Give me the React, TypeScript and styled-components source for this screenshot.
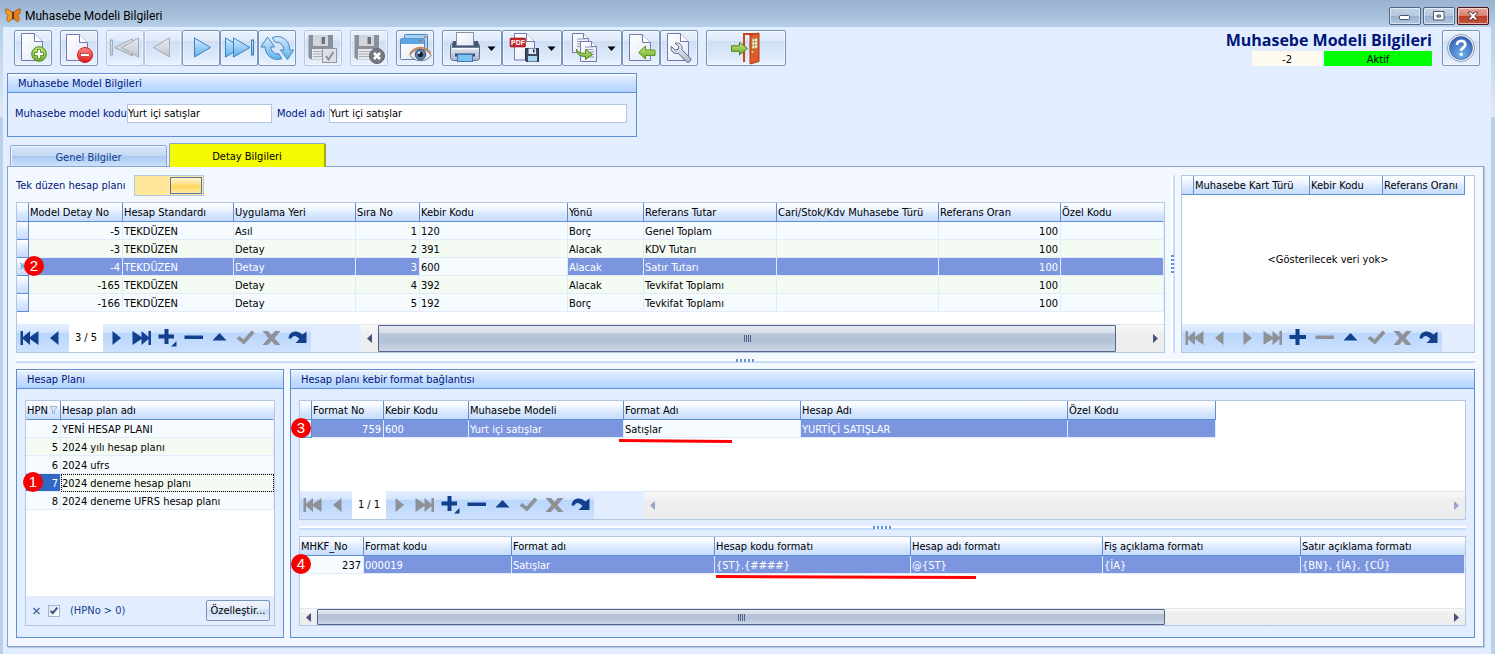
import React from "react";
import styled, { createGlobalStyle, css } from "styled-components";

const uiFont = `"DejaVu Sans Condensed", "DejaVu Sans", "Noto Sans", sans-serif`;
const navy = "#00147a";
const line = "#5f8fd2";
const softLine = "#b3c7e3";

const GlobalStyle = createGlobalStyle`
  *, *::before, *::after { box-sizing: border-box; }
  body { margin: 0; background: #e2eeff; }
  button, input { font: inherit; color: inherit; margin: 0; }
  button { cursor: pointer; }
`;

const Window = styled.div`
  min-height: 100vh;
  min-width: 1240px;
  display: flex;
  flex-direction: column;
  font: 11px/17px ${uiFont};
  color: #000;
  background: linear-gradient(#b5cfe9, #dfeaf8 90px, #bad1ea 90px) 0 27px no-repeat;
`;

const TitleBar = styled.header`
  height: 27px;
  flex: none;
  display: flex;
  align-items: center;
  gap: 4px;
  padding: 4px 6px 0 5px;
  background: linear-gradient(#99b3d1, #a4bed9 50%, #b7d0e9);
`;

const WindowTitle = styled.h1`
  margin: 0;
  flex: 1;
  font: 400 12px/18px Roboto, "Open Sans", sans-serif;
`;

const CaptionButtons = styled.div`
  display: flex;
  gap: 2px;
`;

const CaptionButton = styled.button<{ $close?: boolean }>`
  width: 32px;
  height: 18px;
  padding: 0;
  display: flex;
  align-items: center;
  justify-content: center;
  border: 1px solid ${(p) => (p.$close ? "#4d1219" : "#536680")};
  border-radius: 2px;
  box-shadow: inset 0 0 0 1px rgba(255, 255, 255, 0.55);
  background: ${(p) =>
    p.$close
      ? "linear-gradient(#e6a79b, #d5806f 48%, #ba3d26 50%, #c4553b)"
      : "linear-gradient(#c2d3e6, #b5c8de 48%, #98b0cc 50%, #b0c8e2)"};
`;

const Client = styled.main`
  flex: 1;
  display: flex;
  flex-direction: column;
  margin: 0 4px 0 3px;
  padding: 3px 7px 7px 4px;
  background: #e2eeff;
`;

const Toolbar = styled.div`
  display: flex;
  align-items: flex-start;
  gap: 8px;
  padding: 0 4px 0 7px;
`;

const ToolGroup = styled.div`
  display: flex;
`;

const ToolButton = styled.button<{ $w?: number }>`
  width: ${(p) => p.$w ?? 38}px;
  height: 36px;
  padding: 0;
  border: 1px solid #7995bf;
  border-radius: 2px;
  box-shadow: inset 0 0 0 1px rgba(255, 255, 255, 0.45);
  background: linear-gradient(#eaf2fe, #dfe9f8 28%, #cfdff3 30%, #dce9fa 75%, #e9f3ff);
  svg { display: block; }
  &:disabled { border-color: #b5c7e2; cursor: default; }
`;

const ToolTitle = styled.div`
  margin-left: auto;
  display: flex;
  gap: 10px;
`;

const FormHeading = styled.div`
  width: 202px;
  display: flex;
  flex-direction: column;
  align-items: flex-end;
`;

const FormName = styled.h2`
  margin: 0;
  font: 700 16px/21px "Open Sans", "Noto Sans", sans-serif;
  color: ${navy};
  white-space: nowrap;
`;

const StatusRow = styled.div`
  display: flex;
  gap: 2px;
`;

const StatusBox = styled.output<{ $w: number; $bg: string }>`
  width: ${(p) => p.$w}px;
  height: 15px;
  line-height: 17px;
  text-align: center;
  background: ${(p) => p.$bg};
`;

const Panel = styled.section<{ $w?: number }>`
  position: relative;
  display: flex;
  flex-direction: column;
  ${(p) => (p.$w ? css`width: ${p.$w}px; flex: none;` : css`flex: 1; min-width: 0;`)}
  border: 1px solid ${line};
  background: #e2eeff;
`;

const PanelTitle = styled.h3`
  margin: 0;
  height: 19px;
  padding-left: 10px;
  font: inherit;
  line-height: 20px;
  color: ${navy};
  border-bottom: 1px solid ${line};
  background: linear-gradient(#fff, #e2eeff 2px, #c6deff 55%, #b2d3ff);
`;

const PanelBody = styled.div`
  flex: 1;
  display: flex;
  flex-direction: column;
  padding: 11px 8px;
`;

const ModelBox = styled.div`
  display: flex;
  margin-top: 7px;
`;

const FieldRow = styled.div`
  display: flex;
  align-items: center;
  gap: 5px;
  padding: 11px 9px 13px 7px;
  color: ${navy};
`;

const FieldLabel = styled.label<{ $w?: number }>`
  width: ${(p) => (p.$w ? `${p.$w}px` : "auto")};
  flex: none;
  white-space: nowrap;
  color: ${navy};
`;

const TextInput = styled.input<{ $w?: number }>`
  ${(p) => (p.$w ? css`width: ${p.$w}px;` : css`flex: 1; min-width: 0;`)}
  height: 19px;
  padding: 0;
  border: 1px solid ${softLine};
  background: #fff;
  color: #000;
  outline: none;
`;

const Tabs = styled.div`
  display: flex;
  align-items: flex-end;
  gap: 2px;
  padding-left: 3px;
  margin-top: 6px;
  height: 24px;
`;

const Tab = styled.button<{ $active?: boolean }>`
  position: relative;
  width: 157px;
  padding: 0;
  ${(p) =>
    p.$active
      ? css`
          height: 24px;
          padding-top: 2px;
          background: #f4fa00;
          border: 1px solid #8ba6d3;
          border-right: 2px solid #a3ac13;
          border-bottom: 0;
        `
      : css`
          height: 22px;
          padding-top: 2px;
          color: #113f8f;
          border: 1px solid #8ba6d3;
          box-shadow: inset 1px 1px 0 #f3f8ff;
          background: linear-gradient(#d8e6f8, #c5d9f3 48%, #a9c9f2 52%, #cde2fd);
        `}
  border-radius: 2px 2px 0 0;
`;

const TabPanel = styled.div`
  flex: 1;
  display: flex;
  flex-direction: column;
  margin-top: -1px;
  padding: 8px;
  border: 1px solid #8ba4cf;
  box-shadow: 1px 1px 1px #b6c8e4;
  background: #f3f8ff;
`;

const TopRow = styled.div`
  display: flex;
`;

const Column = styled.div`
  flex: 1;
  min-width: 0;
  display: flex;
  flex-direction: column;
`;

const ToggleRow = styled.div`
  display: flex;
  align-items: center;
  gap: 10px;
  height: 21px;
  margin-bottom: 6px;
`;

const Toggle = styled.input`
  appearance: none;
  width: 70px;
  height: 21px;
  padding: 1px;
  border: 1px solid ${softLine};
  background: #ffe79c;
  &::before {
    content: "";
    display: block;
    width: 32px;
    height: 17px;
    margin-left: auto;
    border: 1px solid #5b76a5;
    background: linear-gradient(#fff3ce, #ffe28c 40%, #ffd659 55%, #ffeaa6);
  }
`;

const GridFrame = styled.div<{ $w?: number; $h?: number; $grow?: boolean }>`
  position: relative;
  display: flex;
  flex-direction: column;
  ${(p) => (p.$w ? css`width: ${p.$w}px;` : "")}
  ${(p) => (p.$h ? css`min-height: ${p.$h}px;` : "")}
  ${(p) => (p.$grow ? css`flex: 1;` : css`flex: none;`)}
  border: 1px solid ${softLine};
  background: #fff;
`;

const GridArea = styled.div`
  flex: 1;
`;

const Table = styled.table<{ $fit?: boolean }>`
  table-layout: fixed;
  width: ${(p) => (p.$fit ? "1px" : "100%")};
  border-collapse: separate;
  border-spacing: 0;
`;

const Th = styled.th<{ $last?: boolean }>`
  height: 19px;
  padding: 0 1px;
  font-weight: 400;
  line-height: 17px;
  text-align: left;
  white-space: nowrap;
  border-right: 1px solid ${(p) => (p.$last ? "transparent" : line)};
  border-bottom: 1px solid ${line};
  background: linear-gradient(#fff, #f0f6ff 30%, #d6e6fe 60%, #c4dbfc) border-box;
`;

type CellTone = "odd" | "even" | "sel" | "hot";
const tones: Record<CellTone, string> = {
  odd: "#f5fbff",
  even: "#f4fbf3",
  sel: "#7b96df",
  hot: "#3168c6",
};

const Td = styled.td<{ $tone: CellTone; $right?: boolean; $focus?: boolean }>`
  position: relative;
  height: 18px;
  padding: 2px ${(p) => (p.$right ? 2 : 1)}px 0;
  line-height: 15px;
  white-space: nowrap;
  text-align: ${(p) => (p.$right ? "right" : "left")};
  color: ${(p) => (p.$tone === "sel" || p.$tone === "hot" ? "#fff" : "#000")};
  border-right: 1px solid #e0ebfc;
  border-bottom: 1px solid #e0ebfc;
  background: ${(p) => tones[p.$tone]};
  ${(p) => (p.$focus ? css`outline: 1px dotted #000; outline-offset: -1px;` : "")}
`;

const Indicator = styled.td`
  position: relative;
  height: 18px;
  padding: 0 0 0 3px;
  line-height: 15px;
  color: #5f97e0;
  border-right: 1px solid ${line};
  border-bottom: 1px solid ${line};
  background: linear-gradient(#fff, #e1edff 45%, #c4dbfc);
`;

const HeadWithFilter = styled.span`
  display: flex;
  align-items: center;
  justify-content: space-between;
  padding-right: 2px;
`;

const NavBar = styled.div`
  display: flex;
  background: #e2eeff;
`;

const NavButtons = styled.div`
  display: flex;
  background: linear-gradient(#e4efff, #d3e5fd 30%, #b9d6fd 33%, #cde1fc);
`;

const NavButton = styled.button`
  width: 26px;
  height: 28px;
  padding: 0;
  border: 0;
  background: none;
  color: #12408c;
  svg { display: block; }
  &:disabled { color: #8e9196; cursor: default; }
`;

const Position = styled.span`
  width: 34px;
  line-height: 28px;
  text-align: center;
  background: #fff;
`;

const ScrollBar = styled.div<{ $h: number; $inset?: number }>`
  flex: 1;
  height: ${(p) => p.$h}px;
  margin-left: ${(p) => p.$inset ?? 0}px;
  display: flex;
  border-top: 1px solid #e3e6ea;
  background: linear-gradient(#fafafa, #eeeeee 30%, #ededed);
`;

const ScrollArrow = styled.button`
  width: 17px;
  padding: 0;
  border: 0;
  background: none;
  display: flex;
  align-items: center;
  justify-content: center;
  color: #46527e;
  &:disabled { color: #98a3c9; }
`;

const Track = styled.div`
  flex: 1;
`;

const Thumb = styled.div<{ $size: number }>`
  width: ${(p) => p.$size}%;
  height: 100%;
  display: flex;
  align-items: center;
  justify-content: center;
  gap: 1px;
  border: 1px solid #53628f;
  border-radius: 1px;
  background: linear-gradient(#e6eaf0, #d5dde7 28%, #b9c6d8 31%, #b3c2d8 60%, #ccd7e7);
  i { width: 1px; height: 7px; background: #4f5f85; }
`;

const VSplitter = styled.div`
  width: 4px;
  margin: 0 6px;
  display: flex;
  align-items: center;
  background: linear-gradient(90deg, #fff 50%, #c5dcfb 50%);
`;

const HSplitter = styled.div`
  height: 4px;
  flex: none;
  margin: 6px 0;
  display: flex;
  justify-content: center;
  background: linear-gradient(#fff 50%, #c5dcfb 50%);
`;

const Grip = styled.span<{ $vertical?: boolean }>`
  ${(p) =>
    p.$vertical
      ? css`width: 3px; height: 19px; background: repeating-linear-gradient(#5f95d8 0 2px, #fff 2px 4px);`
      : css`width: 19px; height: 3px; background: repeating-linear-gradient(90deg, #5f95d8 0 2px, #fff 2px 4px);`}
`;

const BottomRow = styled.div`
  flex: 1;
  display: flex;
  gap: 6px;
`;

const EmptyNote = styled.p`
  margin: 0;
  flex: 1;
  display: flex;
  align-items: center;
  justify-content: center;
`;

const FilterBar = styled.div`
  height: 29px;
  display: flex;
  align-items: center;
  padding: 0 4px 0 6px;
  gap: 7px;
  background: #e2eeff;
  label { flex: 1; display: flex; align-items: center; gap: 10px; color: #12408c; }
`;

const PlainButton = styled.button`
  width: 9px;
  height: 12px;
  padding: 0;
  border: 0;
  background: none;
  color: #3f66a5;
  svg { display: block; }
`;

const Check = styled.input`
  appearance: none;
  width: 12px;
  height: 12px;
  border: 1px solid #9fb6d6;
  background: linear-gradient(135deg, #dbe3ee, #fff);
  display: grid;
  place-items: center;
  &::before {
    content: "";
    width: 4px;
    height: 8px;
    margin-top: -2px;
    border: solid #39547f;
    border-width: 0 2px 2px 0;
    transform: rotate(40deg);
  }
`;

const CustomizeButton = styled.button`
  width: 64px;
  height: 21px;
  padding: 0;
  border: 1px solid #7995bf;
  border-radius: 2px;
  background: linear-gradient(#eff5fe, #e0eaf8 48%, #ccdcf2 50%, #e6f0fe);
`;

const Badge = styled.span<{ $x: number }>`
  position: absolute;
  z-index: 2;
  left: ${(p) => p.$x}px;
  top: -2px;
  width: 20px;
  height: 20px;
  border-radius: 50%;
  background: #f60000;
  color: #fff;
  font: 15px/20px "Liberation Sans", sans-serif;
  text-align: center;
`;

const Stroke = styled.svg<{ $x: number }>`
  position: absolute;
  z-index: 2;
  left: ${(p) => p.$x}px;
  top: 18px;
`;

const HiddenDefs = styled.svg`
  position: absolute;
`;

/* ---------- drawings ---------- */

const Defs = () => (
  <HiddenDefs width="0" height="0" aria-hidden>
    <defs>
      <linearGradient id="paper" x1="0" y1="0" x2="1" y2="1">
        <stop offset="0" stopColor="#fff" />
        <stop offset="1" stopColor="#e3e8f4" />
      </linearGradient>
      <linearGradient id="green" x1="0" y1="0" x2="0" y2="1">
        <stop offset="0" stopColor="#c3e676" />
        <stop offset="1" stopColor="#6fae2c" />
      </linearGradient>
      <linearGradient id="red" x1="0" y1="0" x2="0" y2="1">
        <stop offset="0" stopColor="#fb8e8e" />
        <stop offset="1" stopColor="#e01515" />
      </linearGradient>
      <linearGradient id="blue" x1="0" y1="0" x2="0" y2="1">
        <stop offset="0" stopColor="#d3ecfd" />
        <stop offset="1" stopColor="#5fb0ec" />
      </linearGradient>
      <linearGradient id="grey" x1="0" y1="0" x2="0" y2="1">
        <stop offset="0" stopColor="#e9edf2" />
        <stop offset="1" stopColor="#c0c5cd" />
      </linearGradient>
      <linearGradient id="steel" x1="0" y1="0" x2="0" y2="1">
        <stop offset="0" stopColor="#f5f7fb" />
        <stop offset="1" stopColor="#aab6cb" />
      </linearGradient>
      <radialGradient id="globe" cx=".5" cy=".8" r=".8">
        <stop offset="0" stopColor="#6fb0ec" />
        <stop offset="1" stopColor="#2f5fb0" />
      </radialGradient>
    </defs>
  </HiddenDefs>
);

const Icon = ({ w = 38, children }: { w?: number; children: React.ReactNode }) => (
  <svg width={w - 2} height="34" viewBox={`1 1 ${w - 2} 34`} aria-hidden>
    {children}
  </svg>
);

const Page = ({ x, y, w, h, fold = 8 }: { x: number; y: number; w: number; h: number; fold?: number }) => (
  <g stroke="#7479b4" strokeLinejoin="round">
    <path d={`M${x} ${y}h${w - fold}l${fold} ${fold}v${h - fold}h${-w}z`} fill="url(#paper)" />
    <path d={`M${x + w - fold} ${y}v${fold}h${fold}`} fill="#fff" />
  </g>
);

const Caret = () => <path d="M45.5 16.5h8l-4 4.5z" fill="#000" />;

const NewIcon = () => (
  <Icon>
    <Page x={7.5} y={3.5} w={21} h={27} />
    <circle cx="25" cy="24" r="7.3" fill="url(#green)" stroke="#4c8421" />
    <path d="M23.5 19.5h3v3h3v3h-3v3h-3v-3h-3v-3h3z" fill="#fff" stroke="#4c8421" strokeWidth=".8" />
  </Icon>
);

const DeleteIcon = () => (
  <Icon>
    <Page x={6.5} y={4.5} w={21} h={26} />
    <circle cx="25" cy="25" r="7.5" fill="url(#red)" stroke="#d02020" />
    <rect x="20.5" y="23.5" width="9" height="3" fill="#fff" stroke="#b01414" strokeWidth=".6" />
  </Icon>
);

const FirstIcon = () => (
  <Icon>
    <g fill="url(#grey)" stroke="#a3aab5">
      <path d="M26.5 9v17L8.5 17.5z" />
      <path d="M32.5 8v19L15.500 17.500z" />
      <rect x="4.500" y="10" width="2" height="15" />
    </g>
  </Icon>
);

const PrevIcon = () => (
  <Icon>
    <path d="M25.500 8v19L9.500 17.500z" fill="url(#grey)" stroke="#a3aab5" />
  </Icon>
);

const NextIcon = () => (
  <Icon>
    <path d="M12.500 8v19L28.500 17.500z" fill="url(#blue)" stroke="#3f7fc0" />
  </Icon>
);

const LastIcon = () => (
  <Icon>
    <g fill="url(#blue)" stroke="#3f7fc0">
      <path d="M5.500 8v19L22 17.500z" />
      <path d="M13.500 8v19L30 17.500z" />
      <rect x="31.500" y="10" width="2" height="15" />
    </g>
  </Icon>
);

const RefreshIcon = () => (
  <Icon>
    <g fill="url(#blue)" stroke="#4586c2" strokeLinejoin="round">
      <path d="M9.500 7L3 17h4c.5 7 5.500 12.500 12.500 12.500 1.800 0 3-.3 4.300-.9l-3-4.800c-4.500.4-7.600-2.500-8.100-6.800h3.800z" />
      <path d="M29.500 29.500L35.500 20h-3.700C31.400 12 26.500 6.800 19.500 6.500c-2 0-3.700.5-5.200 1.300l3 4.500c4.700-.7 8.300 2.800 8.600 7.700H22.500z" />
    </g>
  </Icon>
);

const GreyFloppy = () => (
  <>
    <path d="M4.500 5h24.500v24.500H7l-2.500-2z" fill="#8c9199" />
    <rect x="9" y="5" width="15" height="11" fill="#d3d7dd" />
    <rect x="17.500" y="7" width="3.500" height="7" fill="#6e737b" />
    <rect x="8" y="19" width="17" height="10.500" fill="#e4e7eb" />
    <path d="M9 21.500h14M9 24h14M9 26.500h14" stroke="#aab0b8" />
  </>
);

const SaveIcon = () => (
  <Icon>
    <GreyFloppy />
    <rect x="18.500" y="18.500" width="14" height="14" fill="#dde0e4" stroke="#92979f" />
    <path d="M22 26l2.500 3.500L29.500 22" fill="none" stroke="#8b9199" strokeWidth="2" />
  </Icon>
);

const SaveCancelIcon = () => (
  <Icon>
    <GreyFloppy />
    <circle cx="27" cy="26" r="7.500" fill="#767b83" stroke="#5f646c" />
    <path d="M24 23l6 6M30 23l-6 6" stroke="#fff" strokeWidth="2.600" />
  </Icon>
);

const ViewIcon = () => (
  <Icon>
    <rect x="8.500" y="4.500" width="23" height="18" rx="1" fill="#a9d3f4" stroke="#4b87c4" />
    <circle cx="29" cy="7" r="1" fill="#e9503f" />
    <rect x="4.500" y="8.500" width="24" height="21" rx="1" fill="url(#paper)" stroke="#6d7fb4" />
    <rect x="5" y="8.500" width="23" height="5.500" fill="#5aa6e2" />
    <circle cx="24.500" cy="11" r="1" fill="#e9503f" />
    <path d="M14 25.500c5-8.500 16-8.500 21 0-5 7-16 7-21 0z" fill="#f0f3fa" stroke="#68708f" />
    <path d="M14 24c5-8.500 16-8.500 20.500-.5" fill="none" stroke="#c98a4e" strokeWidth="1.800" />
    <circle cx="24.500" cy="24.500" r="5.300" fill="#5f7ea8" stroke="#34486c" />
    <circle cx="24.500" cy="24.500" r="2.600" fill="#131a2c" />
    <circle cx="23" cy="22.800" r="1.100" fill="#fff" />
  </Icon>
);

const PrintIcon = () => (
  <Icon w={60}>
    <rect x="8.500" y="13" width="29" height="17.500" rx="3" fill="url(#steel)" stroke="#5b6b93" />
    <path d="M11 11h25l1.500 7.500h-28z" fill="#465475" />
    <rect x="14.500" y="2.500" width="17" height="13" fill="url(#paper)" stroke="#878fb2" />
    <path d="M10 18.500h27" stroke="#f8faff" strokeWidth="1.500" />
    <path d="M13 23.500h20v3H13z" fill="#3c4a6c" />
    <rect x="15.500" y="24.500" width="15" height="7" fill="#7cc2f2" stroke="#3f78ba" />
    <Caret />
  </Icon>
);

const PdfIcon = () => (
  <Icon w={60}>
    <Page x={12.5} y={3.5} w={20} h={26.5} />
    <rect x="8" y="8" width="15.500" height="9" rx="1" fill="#c4262b" stroke="#9c1419" strokeWidth=".6" />
    <text x="9" y="15" fontSize="7" fontWeight="700" fill="#fff" fontFamily="Liberation Sans, sans-serif">PDF</text>
    <path d="M23.500 18.500h13v13h-12l-1-1z" fill="#3d4a66" stroke="#232c42" />
    <rect x="26.500" y="18.500" width="7.500" height="5.500" fill="#e3e8f2" />
    <rect x="31" y="19.500" width="1.500" height="3" fill="#232c42" />
    <rect x="26" y="26" width="9" height="5.500" fill="#a9d4f2" />
    <Caret />
  </Icon>
);

const CopyIcon = () => (
  <Icon w={60}>
    <Page x={10.5} y={3.5} w={16} h={19} fold={5} />
    <path d="M15 9h8M15 11.500h8M15 14h8M15 16.500h8" stroke="#8d98b8" />
    <Page x={18.5} y={11.5} w={16} h={20} fold={5} />
    <path d="M23 17h8M23 19.500h8M28 22h4M30 24.500h2M28 27h4" stroke="#8d98b8" />
    <path d="M14.500 19c1.500 4 5 4.500 9 4.200V19.500l7 5-7 5v-3c-5.500 0-9-2-9-7.500z" fill="url(#green)" stroke="#4c8421" strokeLinejoin="round" />
    <Caret />
  </Icon>
);

const ExportIcon = () => (
  <Icon>
    <Page x={7.5} y={4.5} w={21} h={26} />
    <path d="M16.500 22.500l7-6.500v4h9.500v5.500h-9.500V29z" fill="url(#green)" stroke="#5d9427" strokeLinejoin="round" />
  </Icon>
);

const WrenchIcon = () => (
  <Icon>
    <Page x={7.5} y={3.5} w={21} h={27} />
    <path
      d="M15 13.300c4-1.500 8 2 7 6.500l8.300 8.300c1.700 2.400-1.500 5.400-3.800 3.700l-8.300-8.500c-4 1.200-8.200-2.200-7-7l4 3.800 3-.8.700-2.800z"
      fill="url(#steel)"
      stroke="#59688c"
      strokeLinejoin="round"
    />
  </Icon>
);

const ExitIcon = () => (
  <Icon w={80}>
    <path d="M38 32V4h12" fill="none" stroke="#c9451c" strokeWidth="2" />
    <path d="M44 5l9-2v28.500L44 34z" fill="#dd5a2b" stroke="#b23a14" />
    <path d="M46 9l5.500-1v10L46 19z" fill="#fff2d0" stroke="#a98a4c" strokeWidth=".8" />
    <path d="M48.700 8.500v10M46 12l5.500-.7M46 15.500l5.500-.7" stroke="#a98a4c" strokeWidth=".8" />
    <circle cx="46.500" cy="22" r="1" fill="#ffd98c" />
    <path d="M25.500 15.800h8v-3.500l8 6.200-8 6.500v-3.700h-8z" fill="url(#green)" stroke="#4c8421" strokeLinejoin="round" />
  </Icon>
);

const HelpIcon = () => (
  <Icon>
    <circle cx="19" cy="18" r="13.500" fill="#f4f7fc" stroke="#8d9cbd" />
    <circle cx="19" cy="18" r="11.500" fill="url(#globe)" stroke="#3a5da0" strokeWidth=".6" />
    <path d="M15 15c0-5.500 8.300-5.500 8.300-.6 0 3.300-4.100 3.200-4.100 6.400" fill="none" stroke="#fff" strokeWidth="2.800" />
    <circle cx="19.200" cy="24.300" r="1.700" fill="#fff" />
  </Icon>
);

const Butterfly = () => (
  <svg width="16" height="15" viewBox="0 0 16 15" aria-hidden>
    <path d="M7.500 5C6 2 2 .5.500 1c0 2.500.5 5 2.500 6.500C1.500 9 1.500 12 3 14c2.500-.5 4-3 4.500-5.500z" fill="#f59a1c" stroke="#8a4a10" strokeWidth=".6" />
    <path d="M8.500 5C10 2 14 .5 15.500 1c0 2.500-.5 5-2.500 6.500 1.500 1.500 1.500 4.500 0 6.500-2.500-.5-4-3-4.500-5.500z" fill="#ee7d12" stroke="#8a4a10" strokeWidth=".6" />
    <path d="M8 3.500v8" stroke="#3d2208" strokeWidth="1.400" />
  </svg>
);

const Funnel = () => (
  <svg width="7" height="8" viewBox="0 0 7 8" aria-hidden>
    <path d="M.5.500h6v1.500L4.500 4.200v3h-2v-3L.5 2z" fill="#dbe7f8" stroke="#8ea6cc" strokeWidth=".8" />
  </svg>
);

const navShapes = {
  first: <path d="M3.500 7H6v6l7-6v6l8.500-6v14L13 15v6l-7-6v6H3.500z" />,
  prev: <path d="M7 14l8.500-7v14z" />,
  next: <path d="M18 14L9.500 7v14z" />,
  last: <path d="M22 7h-2.500v6l-7-6v6L3.500 7v14l9-6v6l7-6v6H22z" />,
  append: <path d="M9.500 5h4v5.500H19v4h-5.500V20h-4v-5.500H3.500v-4h6zM21.500 17v5.500H16z" />,
  add: <path d="M9.500 5h4v6H20v4h-6.500v6h-4v-6H3.500v-4h6z" />,
  remove: <path d="M3.500 11.500h18.500V15H3.500z" />,
  up: <path d="M12.500 9l7 7.500h-14z" />,
  check: <path d="M3.500 14.500L6.500 12l4 3.500 8-9L21.500 9 11 20.500z" />,
  cancel: <path d="M3.500 7H9l3.500 4L16 7h5.500l-6 7 6 7H16l-3.500-4L9 21H3.500l6-7z" />,
  redo: <path d="M3.500 14.500C4 7.500 11.500 5 17.500 10.500L21.500 7.500V19H10.500l4-4C11 11 7.500 11 6.500 14.500z" />,
};
type NavKind = keyof typeof navShapes;

const navNames: Record<NavKind, string> = {
  first: "İlk kayıt", prev: "Önceki kayıt", next: "Sonraki kayıt", last: "Son kayıt", append: "Ekle", add: "Ekle",
  remove: "Sil", up: "Düzenle", check: "Onayla", cancel: "Vazgeç", redo: "Yenile",
};

const Navigator = ({ position, disabled, add }: { position?: string; disabled: NavKind[]; add: NavKind }) => {
  const button = (kind: NavKind) => (
    <NavButton key={kind} aria-label={navNames[kind]} disabled={disabled.includes(kind)}>
      <svg width="26" height="28" viewBox="0 0 26 28" fill="currentColor" aria-hidden>
        {navShapes[kind]}
      </svg>
    </NavButton>
  );
  return (
    <NavButtons>
      {button("first")}
      {button("prev")}
      {position && <Position>{position}</Position>}
      {(["next", "last", add, "remove", "up", "check", "cancel", "redo"] as NavKind[]).map(button)}
    </NavButtons>
  );
};

const Scroll = ({ height, inset, size }: { height: number; inset?: number; size?: number }) => (
  <ScrollBar $h={height} $inset={inset}>
    <ScrollArrow aria-label="Sola kaydır" disabled={!size}>
      <svg width="5" height="9" viewBox="0 0 5 9" aria-hidden><path d="M5 0v9L0 4.500z" fill="currentColor" /></svg>
    </ScrollArrow>
    <Track>{size && <Thumb $size={size}><i /><i /><i /><i /></Thumb>}</Track>
    <ScrollArrow aria-label="Sağa kaydır" disabled={!size}>
      <svg width="5" height="9" viewBox="0 0 5 9" aria-hidden><path d="M0 0v9l5-4.500z" fill="currentColor" /></svg>
    </ScrollArrow>
  </ScrollBar>
);

const Cols = ({ widths }: { widths: (number | undefined)[] }) => (
  <colgroup>
    {widths.map((w, i) => (
      <col key={i} width={w} />
    ))}
  </colgroup>
);

/* ---------- data ---------- */

const detailHeads = ["Model Detay No", "Hesap Standardı", "Uygulama Yeri", "Sıra No", "Kebir Kodu", "Yönü", "Referans Tutar", "Cari/Stok/Kdv Muhasebe Türü", "Referans Oran", "Özel Kodu"];
const detailRows = [
  ["-5", "TEKDÜZEN", "Asıl", "1", "120", "Borç", "Genel Toplam", "", "100", ""],
  ["-3", "TEKDÜZEN", "Detay", "2", "391", "Alacak", "KDV Tutarı", "", "100", ""],
  ["-4", "TEKDÜZEN", "Detay", "3", "600", "Alacak", "Satır Tutarı", "", "100", ""],
  ["-165", "TEKDÜZEN", "Detay", "4", "392", "Alacak", "Tevkifat Toplamı", "", "100", ""],
  ["-166", "TEKDÜZEN", "Detay", "5", "192", "Borç", "Tevkifat Toplamı", "", "100", ""],
];
const detailRight = [0, 3, 8];

const plans = [
  ["2", "YENİ HESAP PLANI"],
  ["5", "2024 yılı hesap planı"],
  ["6", "2024 ufrs"],
  ["7", "2024 deneme hesap planı"],
  ["8", "2024 deneme UFRS hesap planı"],
];

const bindHeads = ["Format No", "Kebir Kodu", "Muhasebe Modeli", "Format Adı", "Hesap Adı", "Özel Kodu"];
const bindRow = ["759", "600", "Yurt içi satışlar", "Satışlar", "YURTİÇİ SATIŞLAR", ""];

const formatHeads = ["MHKF_No", "Format kodu", "Format adı", "Hesap kodu formatı", "Hesap adı formatı", "Fiş açıklama formatı", "Satır açıklama formatı"];
const formatRow = ["237", "000019", "Satışlar", "{ST}.{####}", "@{ST}", "{İA}", "{BN}, {İA}, {CÜ}"];

/* ---------- page ---------- */

const MainToolbar = () => (
  <Toolbar>
    <ToolButton aria-label="Yeni"><NewIcon /></ToolButton>
    <ToolButton aria-label="Sil"><DeleteIcon /></ToolButton>
    <ToolGroup>
      <ToolButton aria-label="İlk" disabled><FirstIcon /></ToolButton>
      <ToolButton aria-label="Önceki" disabled><PrevIcon /></ToolButton>
      <ToolButton aria-label="Sonraki"><NextIcon /></ToolButton>
      <ToolButton aria-label="Son"><LastIcon /></ToolButton>
      <ToolButton aria-label="Yenile"><RefreshIcon /></ToolButton>
    </ToolGroup>
    <ToolButton aria-label="Kaydet" disabled><SaveIcon /></ToolButton>
    <ToolButton aria-label="Vazgeç" disabled><SaveCancelIcon /></ToolButton>
    <ToolButton aria-label="Görünüm"><ViewIcon /></ToolButton>
    <ToolGroup>
      <ToolButton $w={60} aria-label="Yazdır"><PrintIcon /></ToolButton>
      <ToolButton $w={60} aria-label="PDF olarak kaydet"><PdfIcon /></ToolButton>
      <ToolButton $w={60} aria-label="Kopyala"><CopyIcon /></ToolButton>
      <ToolButton aria-label="Aktar"><ExportIcon /></ToolButton>
      <ToolButton aria-label="Ayarlar"><WrenchIcon /></ToolButton>
    </ToolGroup>
    <ToolButton $w={80} aria-label="Çıkış"><ExitIcon /></ToolButton>
    <ToolTitle>
      <FormHeading>
        <FormName>Muhasebe Modeli Bilgileri</FormName>
        <StatusRow>
          <StatusBox $w={70} $bg="#fffaf0">-2</StatusBox>
          <StatusBox $w={108} $bg="#00ff00">Aktif</StatusBox>
        </StatusRow>
      </FormHeading>
      <ToolButton aria-label="Yardım"><HelpIcon /></ToolButton>
    </ToolTitle>
  </Toolbar>
);

const DetailGrid = () => (
  <GridFrame $h={151}>
    <GridArea>
      <Table>
        <Cols widths={[12, 94, 111, 122, 64, 148, 76, 133, 162, 122, undefined]} />
        <thead>
          <tr>
            <Th />
            {detailHeads.map((h, i) => <Th key={h} $last={i === detailHeads.length - 1}>{h}</Th>)}
          </tr>
        </thead>
        <tbody>
          {detailRows.map((row, r) => (
            <tr key={row[0]}>
              <Indicator>
                {r === 2 && (
                  <>
                    <svg width="5" height="8" viewBox="0 0 5 8" aria-hidden><path d="M0 1l4 3-4 3M4.500 1L1 4l3.500 3" fill="none" stroke="currentColor" /></svg>
                    <Badge $x={7}>2</Badge>
                  </>
                )}
              </Indicator>
              {row.map((cell, c) => (
                <Td key={c} $right={detailRight.includes(c)} $tone={r === 2 ? (c === 4 ? "odd" : "sel") : r % 2 ? "even" : "odd"}>
                  {cell}
                </Td>
              ))}
            </tr>
          ))}
        </tbody>
      </Table>
    </GridArea>
    <NavBar>
      <Navigator position="3 / 5" add="append" disabled={["check", "cancel"]} />
      <Scroll height={28} inset={50} size={96} />
    </NavBar>
  </GridFrame>
);

const CardGrid = () => (
  <GridFrame $w={294}>
    <Table $fit>
      <Cols widths={[12, 116, 73, 82]} />
      <thead>
        <tr>
          <Th />
          <Th>Muhasebe Kart Türü</Th>
          <Th>Kebir Kodu</Th>
          <Th>Referans Oranı</Th>
        </tr>
      </thead>
    </Table>
    <EmptyNote>&lt;Gösterilecek veri yok&gt;</EmptyNote>
    <NavBar>
      <Navigator add="add" disabled={["first", "prev", "next", "last", "remove", "check", "cancel"]} />
    </NavBar>
  </GridFrame>
);

const PlanGrid = () => (
  <GridFrame $grow>
    <GridArea>
      <Table>
        <Cols widths={[35, undefined]} />
        <thead>
          <tr>
            <Th><HeadWithFilter>HPN<Funnel /></HeadWithFilter></Th>
            <Th $last>Hesap plan adı</Th>
          </tr>
        </thead>
        <tbody>
          {plans.map(([no, name], r) => (
            <tr key={no}>
              <Td $right $tone={r === 3 ? "hot" : r % 2 ? "even" : "odd"}>
                {no}
                {r === 3 && <Badge $x={-3}>1</Badge>}
              </Td>
              <Td $tone={r % 2 ? "even" : "odd"} $focus={r === 3}>{name}</Td>
            </tr>
          ))}
        </tbody>
      </Table>
    </GridArea>
    <FilterBar>
      <PlainButton aria-label="Filtreyi kaldır">
        <svg width="9" height="12" viewBox="0 0 9 12" aria-hidden><path d="M1.500 3l6 6M7.500 3l-6 6" stroke="currentColor" strokeWidth="1.300" /></svg>
      </PlainButton>
      <label>
        <Check type="checkbox" defaultChecked />
        (HPNo &gt; 0)
      </label>
      <CustomizeButton>Özelleştir...</CustomizeButton>
    </FilterBar>
  </GridFrame>
);

const BindingGrid = () => (
  <GridFrame $h={120} $grow>
    <GridArea>
      <Table $fit>
        <Cols widths={[12, 72, 85, 155, 177, 267, 148]} />
        <thead>
          <tr>
            <Th />
            {bindHeads.map((h) => <Th key={h}>{h}</Th>)}
          </tr>
        </thead>
        <tbody>
          <tr>
            <Indicator><Badge $x={-9}>3</Badge></Indicator>
            {bindRow.map((cell, c) => (
              <Td key={c} $right={c === 0} $tone={c === 3 ? "odd" : "sel"}>
                {cell}
                {c === 3 && (
                  <Stroke $x={-5} width="114" height="6" aria-hidden>
                    <path d="M0 2.500L113 3.500" stroke="#f00" strokeWidth="3" />
                  </Stroke>
                )}
              </Td>
            ))}
          </tr>
        </tbody>
      </Table>
    </GridArea>
    <NavBar>
      <Navigator position="1 / 1" add="append" disabled={["first", "prev", "next", "last", "check", "cancel"]} />
      <Scroll height={28} inset={50} />
    </NavBar>
  </GridFrame>
);

const FormatGrid = () => (
  <GridFrame $h={90}>
    <GridArea>
      <Table>
        <Cols widths={[64, 148, 203, 196, 192, 198, undefined]} />
        <thead>
          <tr>
            {formatHeads.map((h, i) => <Th key={h} $last={i === formatHeads.length - 1}>{h}</Th>)}
          </tr>
        </thead>
        <tbody>
          <tr>
            {formatRow.map((cell, c) => (
              <Td key={c} $right={c === 0} $tone={c === 0 ? "odd" : "sel"}>
                {cell}
                {c === 0 && <Badge $x={-9}>4</Badge>}
                {c === 3 && (
                  <Stroke $x={1} width="260" height="6" aria-hidden>
                    <path d="M0 2.500L260 3.500" stroke="#f00" strokeWidth="3" />
                  </Stroke>
                )}
              </Td>
            ))}
          </tr>
        </tbody>
      </Table>
    </GridArea>
    <NavBar>
      <Scroll height={17} size={75} />
    </NavBar>
  </GridFrame>
);

export default function App() {
  return (
    <Window>
      <GlobalStyle />
      <Defs />
      <TitleBar>
        <Butterfly />
        <WindowTitle>Muhasebe Modeli Bilgileri</WindowTitle>
        <CaptionButtons>
          <CaptionButton aria-label="Simge durumuna küçült">
            <svg width="12" height="8" viewBox="0 0 12 8" aria-hidden><rect x=".5" y="3.500" width="10" height="4" rx="1" fill="#fff" stroke="#47536a" /></svg>
          </CaptionButton>
          <CaptionButton aria-label="Ekranı kapla">
            <svg width="12" height="10" viewBox="0 0 12 10" aria-hidden><path d="M.5.500h10.500v8.500H.5zM4 4h3.500v2H4z" fill="#fff" fillRule="evenodd" stroke="#47536a" /></svg>
          </CaptionButton>
          <CaptionButton $close aria-label="Kapat">
            <svg width="12" height="10" viewBox="0 0 12 10" aria-hidden><path d="M1 1h3l2 2 2-2h3L7.800 5 11 9H8L6 7 4 9H1l3.200-4z" fill="#fff" stroke="#553336" strokeWidth=".9" /></svg>
          </CaptionButton>
        </CaptionButtons>
      </TitleBar>
      <Client>
        <MainToolbar />
        <ModelBox>
          <Panel $w={630}>
            <PanelTitle>Muhasebe Model Bilgileri</PanelTitle>
            <FieldRow>
              <FieldLabel htmlFor="code" $w={107}>Muhasebe model kodu</FieldLabel>
              <TextInput id="code" $w={145} defaultValue="Yurt içi satışlar" />
              <FieldLabel htmlFor="name" $w={47}>Model adı</FieldLabel>
              <TextInput id="name" defaultValue="Yurt içi satışlar" />
            </FieldRow>
          </Panel>
        </ModelBox>
        <Tabs role="tablist">
          <Tab role="tab" aria-selected={false}>Genel Bilgiler</Tab>
          <Tab role="tab" aria-selected $active>Detay Bilgileri</Tab>
        </Tabs>
        <TabPanel role="tabpanel">
          <TopRow>
            <Column>
              <ToggleRow>
                <FieldLabel htmlFor="uniform" $w={108}>Tek düzen hesap planı</FieldLabel>
                <Toggle id="uniform" type="checkbox" role="switch" defaultChecked />
              </ToggleRow>
              <DetailGrid />
            </Column>
            <VSplitter><Grip $vertical /></VSplitter>
            <CardGrid />
          </TopRow>
          <HSplitter><Grip /></HSplitter>
          <BottomRow>
            <Panel $w={268}>
              <PanelTitle>Hesap Planı</PanelTitle>
              <PanelBody><PlanGrid /></PanelBody>
            </Panel>
            <Panel>
              <PanelTitle>Hesap planı kebir format bağlantısı</PanelTitle>
              <PanelBody>
                <BindingGrid />
                <HSplitter><Grip /></HSplitter>
                <FormatGrid />
              </PanelBody>
            </Panel>
          </BottomRow>
        </TabPanel>
      </Client>
    </Window>
  );
}
